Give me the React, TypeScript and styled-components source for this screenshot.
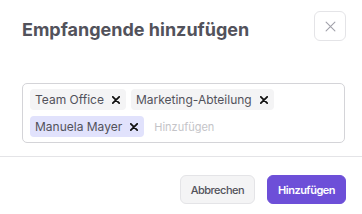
import React, { useState } from 'react';
import styled, { createGlobalStyle } from 'styled-components';

const GlobalStyle = createGlobalStyle`
  html, body {
    margin: 0;
    padding: 0;
    background: #ffffff;
    font-family: Inter, "Noto Sans", sans-serif;
  }
`;

const Dialog = styled.div`
  width: 362px;
  height: 214px;
  background: #fff;
  overflow: hidden;
`;

const Header = styled.div`
  display: flex;
  align-items: center;
  justify-content: space-between;
  padding: 11px 16px 0 22px;
  height: 30px;
`;

const Title = styled.h2`
  margin: 6px 0 0;
  font-size: 18px;
  font-weight: 700;
  color: #52525b;
  letter-spacing: 0;
`;

const CloseButton = styled.button`
  width: 32px;
  height: 30px;
  border: 1px solid #e4e4e7;
  border-radius: 6px;
  background: #fff;
  display: flex;
  align-items: center;
  justify-content: center;
  padding: 0;
`;

const Body = styled.div`
  padding: 42px 17px 13px 22px;
  border-bottom: 1px solid #e4e4e7;
`;

const TagBox = styled.div`
  display: flex;
  flex-wrap: wrap;
  align-items: center;
  gap: 6px 5px;
  min-height: 48px;
  padding: 5px 7px;
  border: 1px solid #d4d4d8;
  border-radius: 5px;
`;

const Chip = styled.span<{ $active?: boolean }>`
  display: inline-flex;
  align-items: center;
  gap: 8px;
  height: 21px;
  padding: 0 6px 0 5px;
  border-radius: 4px;
  background: ${p => (p.$active ? '#e1e2fc' : '#f4f4f5')};
  color: #52525b;
  font-size: 12px;
`;

const Remove = styled.span`
  display: inline-flex;
  align-items: center;
`;

const AddInput = styled.input`
  border: none;
  outline: none;
  font-family: inherit;
  font-size: 11px;
  color: #52525b;
  width: 80px;
  padding: 0 0 0 5px;
  &::placeholder {
    color: #c4c4c8;
  }
`;

const Footer = styled.div`
  display: flex;
  justify-content: flex-end;
  gap: 12px;
  padding: 18px 16px 0 0;
`;

const Button = styled.button<{ $primary?: boolean }>`
  height: 29px;
  padding: 0 10px;
  border-radius: 6px;
  font-family: inherit;
  font-size: 11px;
  letter-spacing: -0.5px;
  font-weight: ${p => (p.$primary ? 600 : 500)};
  border: 1px solid ${p => (p.$primary ? '#6d4fd8' : '#e4e4e7')};
  background: ${p => (p.$primary ? '#6d4fd8' : '#f4f4f5')};
  color: ${p => (p.$primary ? '#fff' : '#52525b')};
`;

const XIcon = ({ size, stroke, width }: { size: number; stroke: string; width: number }) => (
  <svg width={size} height={size} viewBox="0 0 10 10">
    <path d="M1 1 L9 9 M9 1 L1 9" stroke={stroke} strokeWidth={width} strokeLinecap="round" />
  </svg>
);

export default function App() {
  const [tags] = useState([
    { name: 'Team Office', active: false },
    { name: 'Marketing-Abteilung', active: false },
    { name: 'Manuela Mayer', active: true },
  ]);

  return (
    <>
      <GlobalStyle />
      <Dialog>
        <Header>
          <Title>Empfangende hinzufügen</Title>
          <CloseButton aria-label="Schließen">
            <XIcon size={11} stroke="#a1a1aa" width={1} />
          </CloseButton>
        </Header>
        <Body>
          <TagBox>
            {tags.map(t => (
              <Chip key={t.name} $active={t.active}>
                {t.name}
                <Remove>
                  <XIcon size={8} stroke="#111" width={2.2} />
                </Remove>
              </Chip>
            ))}
            <AddInput placeholder="Hinzufügen" />
          </TagBox>
        </Body>
        <Footer>
          <Button>Abbrechen</Button>
          <Button $primary>Hinzufügen</Button>
        </Footer>
      </Dialog>
    </>
  );
}
